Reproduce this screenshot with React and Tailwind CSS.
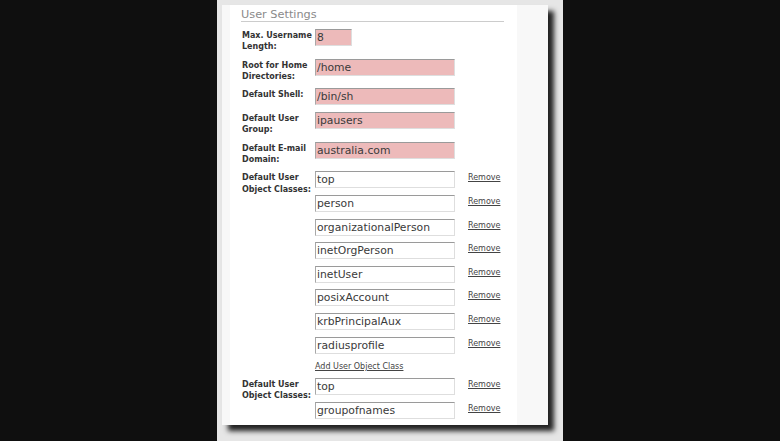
import React from "react";

const font = "font-['DejaVu_Sans','Verdana',sans-serif]";

function Label({ lines }) {
  return (
    <div className="w-[74px] shrink-0 pl-[1px] pt-[1px] text-[8px] font-bold leading-[11.3px] text-[#333] whitespace-nowrap">
      {lines.map((l, i) => (
        <div key={i}>{l}</div>
      ))}
    </div>
  );
}

function Field({ value, pink, width = 140 }) {
  const w = width === 140 ? "w-[140px]" : "w-[37px]";
  return (
    <div
      className={`${w} h-[17px] shrink-0 border border-[#dedede] border-t-[#9a9a9a] border-l-[#a8a8a8] pl-[1px] text-[10.8px] leading-[16px] text-[#3a3a3a] whitespace-nowrap overflow-hidden ${
        pink ? "bg-[#edbaba]" : "bg-white"
      }`}
    >
      {value}
    </div>
  );
}

function Remove() {
  return (
    <span className="ml-[13px] pt-[1px] text-[8px] leading-[11px] underline text-[#444] underline-offset-[1px]">
      Remove
    </span>
  );
}

const userClasses = [
  "top",
  "person",
  "organizationalPerson",
  "inetOrgPerson",
  "inetUser",
  "posixAccount",
  "krbPrincipalAux",
  "radiusprofile",
];

export default function App() {
  return (
    <div className={`w-[780px] h-[441px] bg-[#0f0f0f] flex justify-center ${font}`}>
      <div className="w-[346px] h-full bg-[#e6e6e6] pt-[5px] pl-[5px] overflow-hidden">
        <div className="w-[326px] h-[420px] bg-[#f8f8f8] pl-[8px] pr-[31px] shadow-[6px_6px_5px_rgba(0,0,0,0.85)]">
          <div className="bg-white h-full pl-[11px] pt-[3px]">
            <div className="w-[263px] border-b border-[#cccccc] text-[11.3px] leading-[13px] text-[#8a8a8a]">
              User Settings
            </div>
            <div className="mt-[7px] flex flex-col">
              <div className="flex h-[29.6px]">
                <Label lines={["Max. Username", "Length:"]} />
                <Field value="8" pink width={37} />
              </div>
              <div className="flex h-[29.6px]">
                <Label lines={["Root for Home", "Directories:"]} />
                <Field value="/home" pink />
              </div>
              <div className="flex h-[24px]">
                <Label lines={["Default Shell:"]} />
                <Field value="/bin/sh" pink />
              </div>
              <div className="flex h-[29.6px]">
                <Label lines={["Default User", "Group:"]} />
                <Field value="ipausers" pink />
              </div>
              <div className="flex h-[29.6px]">
                <Label lines={["Default E-mail", "Domain:"]} />
                <Field value="australia.com" pink />
              </div>
              <div className="flex">
                <Label lines={["Default User", "Object Classes:"]} />
                <div className="flex flex-col">
                  {userClasses.map((c) => (
                    <div key={c} className="flex items-start h-[23.6px]">
                      <Field value={c} />
                      <Remove />
                    </div>
                  ))}
                  <div className="h-[17.6px] pt-[1px] text-[8px] leading-[11px] text-[#444] underline underline-offset-[1px]">
                    Add User Object Class
                  </div>
                </div>
              </div>
              <div className="flex">
                <Label lines={["Default User", "Object Classes:"]} />
                <div className="flex flex-col">
                  {["top", "groupofnames"].map((c) => (
                    <div key={c} className="flex items-start h-[24px]">
                      <Field value={c} />
                      <Remove />
                    </div>
                  ))}
                </div>
              </div>
            </div>
          </div>
        </div>
      </div>
    </div>
  );
}
